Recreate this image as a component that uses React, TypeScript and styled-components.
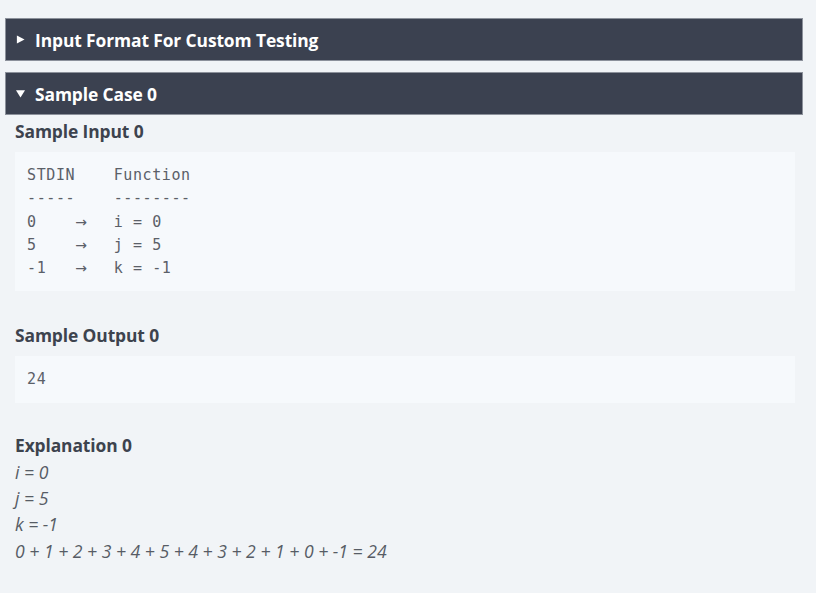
import React from 'react'
import styled, { createGlobalStyle } from 'styled-components'

const GlobalStyle = createGlobalStyle`
  html, body {
    margin: 0;
    padding: 0;
    background: #f1f4f7;
  }
  body {
    font-family: 'Open Sans', 'Noto Sans', sans-serif;
  }
`

const Page = styled.div`
  padding: 18px 13px 20px 5px;
  min-height: 593px;
  box-sizing: border-box;
`

const SectionBar = styled.div<{ $gapAfter?: boolean }>`
  display: flex;
  align-items: center;
  gap: 10px;
  height: 43px;
  box-sizing: border-box;
  padding: 0 0 0 10px;
  background: #3b4150;
  border: 1px solid #8c919b;
  color: #ffffff;
  font-size: 17.4px;
  font-weight: 700;
  letter-spacing: -0.1px;
  margin-bottom: ${({ $gapAfter }) => ($gapAfter ? '11px' : '0')};
`

const Caret = styled.svg`
  width: 9px;
  height: 9px;
  flex: none;
  fill: #ffffff;
`

const Body = styled.div`
  padding: 4px 8px 0 10px;
`

const Heading = styled.h3`
  margin: 0 0 9px;
  font-size: 17.4px;
  line-height: 24px;
  font-weight: 700;
  color: #3d434e;
  letter-spacing: -0.1px;
`

const CodeBlock = styled.pre<{ $last?: boolean }>`
  margin: 0 0 ${({ $last }) => ($last ? '30px' : '32px')};
  padding: 12px 12px 11px;
  background: #f6f9fc;
  font-family: 'DejaVu Sans Mono', 'Liberation Mono', monospace;
  font-size: 15px;
  line-height: 23.3px;
  letter-spacing: 0.6px;
  color: #5b6068;
`

/* arrow takes two mono columns so the wider glyph has room */
const Arrow = styled.span`
  display: inline-block;
  width: 19.26px;
  font-family: 'DejaVu Sans', sans-serif;
  font-size: 14px;
  letter-spacing: 0;
`

const Explanation = styled.div`
  font-style: italic;
  font-size: 17.6px;
  line-height: 26.3px;
  color: #575c65;
`

const ExplanationHeading = styled(Heading)`
  margin-bottom: 2px;
`

const inputRows: [string, string][] = [
  ['0', 'i = 0'],
  ['5', 'j = 5'],
  ['-1', 'k = -1'],
]

const explanationLines = [
  'i = 0',
  'j = 5',
  'k = -1',
  '0 + 1 + 2 + 3 + 4 + 5 + 4 + 3 + 2 + 1 + 0 + -1 = 24',
]

const Section: React.FC<{ title: string; open?: boolean; gapAfter?: boolean }> = ({
  title,
  open,
  gapAfter,
}) => (
  <SectionBar $gapAfter={gapAfter}>
    <Caret viewBox="0 0 10 10">
      {open ? <polygon points="0,1.5 10,1.5 5,9.5" /> : <polygon points="1,0.5 9.5,5 1,9.5" />}
    </Caret>
    {title}
  </SectionBar>
)

const App: React.FC = () => {
  return (
    <Page>
      <GlobalStyle />
      <Section title="Input Format For Custom Testing" gapAfter />
      <Section title="Sample Case 0" open />
      <Body>
        <Heading>Sample Input 0</Heading>
        <CodeBlock>
          {'STDIN    Function\n-----    --------\n'}
          {inputRows.map(([stdin, fn], i) => (
            <React.Fragment key={i}>
              {stdin.padEnd(5, ' ')}
              <Arrow>→</Arrow>
              {'  ' + fn}
              {i < inputRows.length - 1 ? '\n' : ''}
            </React.Fragment>
          ))}
        </CodeBlock>

        <Heading>Sample Output 0</Heading>
        <CodeBlock $last>24</CodeBlock>

        <ExplanationHeading>Explanation 0</ExplanationHeading>
        <Explanation>
          {explanationLines.map((line, i) => (
            <div key={i}>{line}</div>
          ))}
        </Explanation>
      </Body>
    </Page>
  )
}

export default App
